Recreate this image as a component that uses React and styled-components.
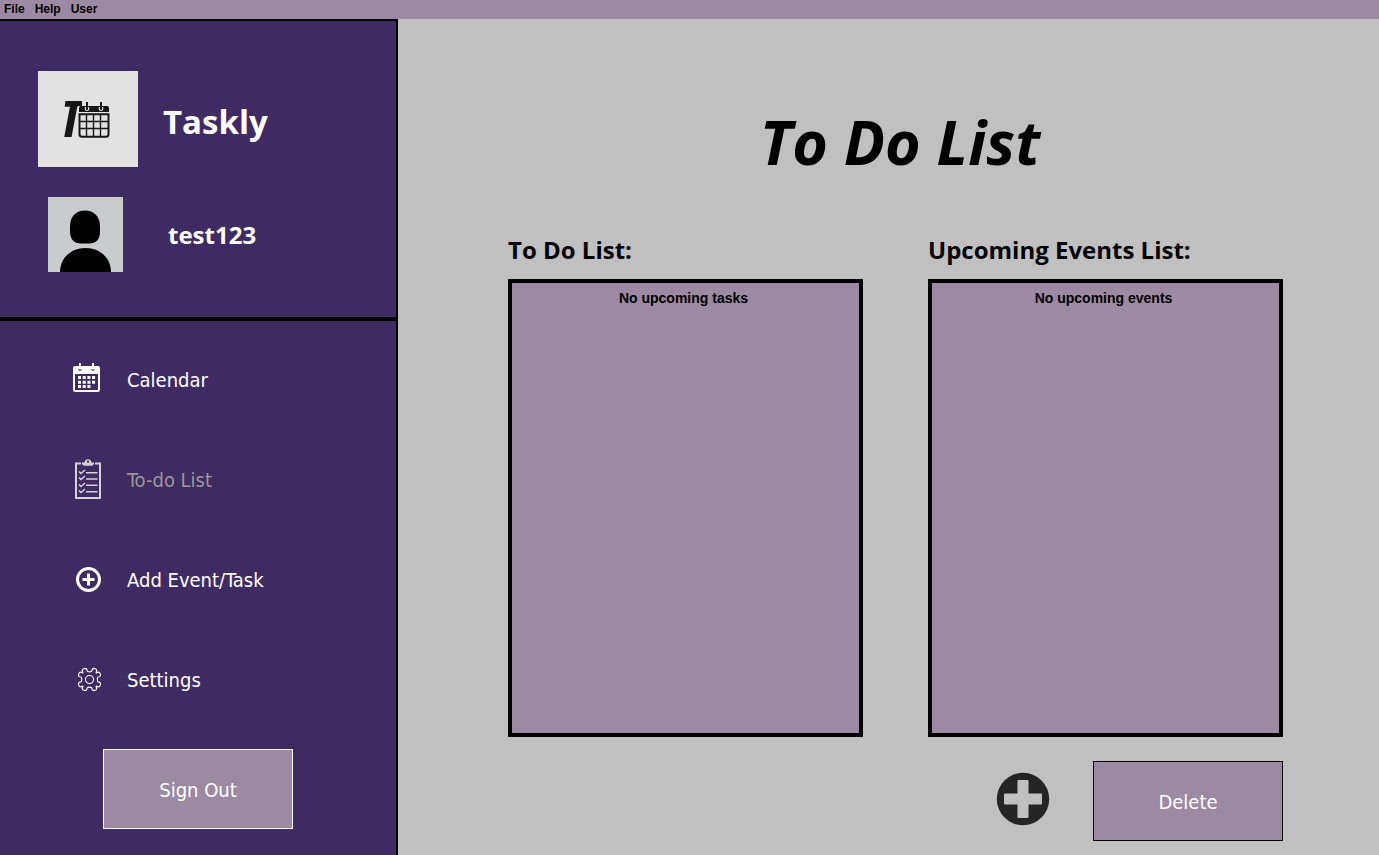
import React from "react";
import styled, { createGlobalStyle } from "styled-components";

const color = {
  violet: "#3f2b63",
  mauve: "#9c8aa3",
  silver: "#c0c0c0",
};
const uiBold = '"Open Sans", "Noto Sans", sans-serif';
const uiPlain = '"DejaVu Sans Condensed", "Noto Sans", sans-serif';
const arial = '"Liberation Sans", Arial, sans-serif';

const GlobalStyle = createGlobalStyle`
  *, *::before, *::after { box-sizing: border-box; }
  body { margin: 0; background: ${color.silver}; }
  button { font: inherit; color: inherit; cursor: pointer; }
  h1, h2, p { margin: 0; }
`;

const Page = styled.div`
  display: flex;
  flex-direction: column;
  min-height: 100vh;
`;

const MenuBar = styled.header`
  display: flex;
  align-items: flex-start;
  gap: 10px;
  height: 19px;
  padding: 0 4px;
  background: ${color.mauve};
  font: bold 12px/18px ${arial};
`;

const MenuButton = styled.button`
  padding: 0;
  border: 0;
  background: none;
`;

const Body = styled.div`
  display: flex;
  flex: 1;
`;

const Sidebar = styled.aside`
  display: flex;
  flex-direction: column;
  flex: none;
  width: 398px;
  border: solid #000;
  border-width: 2px 2px 0 0;
  background: ${color.violet};
  color: #fff;
`;

const Identity = styled.section`
  height: 300px;
  padding: 50px 38px 0;
  border-bottom: 4px solid #000;
`;

const BrandRow = styled.div`
  display: flex;
  align-items: center;
  gap: 25px;
  margin-bottom: 30px;
`;

const BrandName = styled.h1`
  padding-top: 6px;
  font: bold 33px/48px ${uiBold};
`;

const UserRow = styled.div`
  display: flex;
  align-items: center;
  gap: 45px;
  padding-left: 10px;
`;

const UserName = styled.p`
  font: bold 24px/32px ${uiBold};
`;

const Nav = styled.nav`
  display: flex;
  flex-direction: column;
  gap: 60px;
  padding: 39px 68px 0;
`;

const NavButton = styled.button`
  display: flex;
  align-items: center;
  gap: 19px;
  height: 40px;
  padding: 0;
  border: 0;
  background: none;
  color: #fff;
  font: 20px/24px ${uiPlain};

  &:disabled {
    color: #999;
    cursor: default;
  }
`;

const ActionButton = styled.button`
  width: 190px;
  height: 80px;
  padding: 2px 0 0;
  border: 1px solid ${(p) => p.$edge};
  background: ${color.mauve};
  color: #fff;
  font: 20px/24px ${uiPlain};
`;

const SignOut = styled(ActionButton)`
  margin: 49px 0 26px 103px;
`;

const Main = styled.main`
  flex: 1;
  padding: 81px 96px 14px 110px;
  color: #000;
`;

const Title = styled.h1`
  padding-left: 9px;
  text-align: center;
  font: italic bold 61px/84px ${uiBold};
`;

const Lists = styled.div`
  display: grid;
  grid-template-columns: 1fr 1fr;
  gap: 65px;
  margin-top: 46px;
`;

const ListTitle = styled.h2`
  margin-bottom: 9px;
  font: bold 24px/40px ${uiBold};
  white-space: nowrap;
`;

const ListBox = styled.div`
  height: 458px;
  padding: 7px 4px 0 0;
  border: 4px solid #000;
  background: ${color.mauve};
  text-align: center;
  font: bold 14px/16px ${arial};
`;

const Actions = styled.div`
  display: flex;
  justify-content: flex-end;
  align-items: center;
  gap: 43px;
  margin-top: 24px;
`;

const RoundButton = styled.button`
  display: flex;
  padding: 0 0 4px;
  border: 0;
  background: none;
`;

const Logo = () => (
  <svg width="100" height="96" viewBox="0 0 100 96" role="img" aria-label="Taskly logo">
    <rect width="100" height="96" fill="#e2e2e2" />
    <text x="17" y="66" fill="#161616" fontFamily='"Liberation Sans Narrow", "Liberation Sans", sans-serif' fontSize="51" fontWeight="bold" fontStyle="italic">T</text>
    <path d="M16 26h12l-2 14H16zM44 26h30v42H40V35h4z" fill="#e2e2e2" />
    <path d="M41 41v-4q0-2 2-2h26q2 0 2 2v4z" fill="#161616" />
    <path d="M49 31v6M63 31v6" stroke="#161616" strokeWidth="2" />
    <path d="M47.500 36q-.8 3.500 1.500 3.500t1.500-3.500M61.500 36q-.8 3.500 1.500 3.500t1.500-3.500" fill="none" stroke="#e2e2e2" strokeWidth="1.200" />
    <path d="M41.500 43.300h29v20q0 2.400-2.500 2.400h-24q-2.500 0-2.500-2.400z" fill="none" stroke="#161616" strokeWidth="2" />
    <path d="M48.500 43v22M55.500 43v22M62.500 43v22M41 50.500h30M41 57.500h30" stroke="#161616" strokeWidth="1.400" />
  </svg>
);

const Avatar = () => (
  <svg width="75" height="75" viewBox="0 0 75 75" role="img" aria-label="Profile picture">
    <rect width="75" height="75" fill="#c8cccd" />
    <path d="M37 13.500c9 0 15 6 15 16v5c0 8-4 12-11 12h-8c-7 0-11-4-11-12v-5c0-10 6-16 15-16z" />
    <path d="M12 75c0-14 11-24 25.500-24S63 61 63 75z" />
  </svg>
);

const CalendarIcon = () => (
  <svg width="40" height="40" viewBox="0 0 40 40" aria-hidden="true">
    <path d="M5 14V8q0-2 2-2h23q2 0 2 2v6z" fill="#fff" />
    <path d="M12 3v5M25 3v5" stroke="#fff" strokeWidth="2" />
    <path d="M10.500 8q0 2.500 1.500 2.500T13.500 8M23.500 8q0 2.500 1.500 2.500T26.500 8" fill="none" stroke={color.violet} />
    <rect x="6" y="8" width="25" height="23" rx="1.500" fill="none" stroke="#fff" strokeWidth="2" />
    <path d="M10 17.500h17.100M10 22.300h17.100M10 26.500h12.400" fill="none" stroke="#fff" strokeWidth="3" strokeDasharray="3 1.700" />
  </svg>
);

const ChecklistIcon = () => (
  <svg width="40" height="40" viewBox="0 0 40 40" overflow="visible" fill="none" stroke="#d4d2d8" aria-hidden="true">
    <path d="M13 3.500H8V38h24V3.500h-5" strokeWidth="2" />
    <path d="M14 2.500h2.500Q17-.8 20-.8t3.500 3.300H26v1.300q-.5 1.900-2.500 1.900h-7q-2 0-2.500-1.900z" fill="#d4d2d8" stroke="none" />
    <circle cx="20" cy="1.700" r="1.100" fill={color.violet} stroke="none" />
    <path d="M11 11.500l2 2 4-3.500M11 17.500l2 2 4-3.500M11 24.500l2 2 4-3.500M11 30.500l2 2 4-3.500" strokeWidth="1.500" />
    <path d="M18 12.700h11.500M18 19h11.500M18 25.300h11.500M18 31.800h11.500" strokeWidth="1.500" />
  </svg>
);

const AddIcon = () => (
  <svg width="40" height="40" viewBox="0 0 40 40" fill="none" stroke="#fff" strokeWidth="3" aria-hidden="true">
    <circle cx="20.500" cy="19.500" r="11" />
    <path d="M20.500 13.500v12M14.500 19.500h12" />
  </svg>
);

const GearIcon = () => (
  <svg width="40" height="40" viewBox="0 0 40 40" fill="none" stroke="#fff" strokeWidth="1.100" aria-hidden="true">
    <circle cx="21.500" cy="19.500" r="4" />
    <g transform="translate(21.500 19.500)" strokeLinejoin="round">
      <path d="M-2.200-8.200Q-2.600-11.200-4.600-11.100L-6.800-10.200Q-7.900-9 -6.700-7.400Q-6.200-6.200-7.400-6.700Q-9-7.900-10.200-6.800L-11.100-4.600Q-11.200-2.600-8.200-2.200Q-7 0-8.200 2.200Q-11.200 2.600-11.100 4.600L-10.200 6.800Q-9 7.900-7.400 6.700Q-6.200 6.200-6.700 7.400Q-7.900 9-6.800 10.200L-4.600 11.100Q-2.600 11.200-2.200 8.200Q0 7 2.200 8.200Q2.600 11.200 4.600 11.100L6.800 10.200Q7.900 9 6.700 7.400Q6.200 6.200 7.400 6.700Q9 7.900 10.200 6.800L11.100 4.600Q11.200 2.600 8.200 2.200Q7 0 8.200-2.200Q11.200-2.600 11.100-4.600L10.200-6.800Q9-7.900 7.400-6.700Q6.200-6.200 6.700-7.400Q7.900-9 6.800-10.200L4.600-11.100Q2.600-11.200 2.200-8.200Q0-7-2.200-8.200z" />
    </g>
  </svg>
);

const PlusIcon = () => (
  <svg width="54" height="54" viewBox="0 0 54 54" aria-hidden="true">
    <circle cx="27" cy="27" r="26.200" fill="#252525" />
    <rect x="21.500" y="8" width="11" height="38" rx="1" fill={color.silver} />
    <rect x="8" y="21.500" width="38" height="11" rx="1" fill={color.silver} />
  </svg>
);

const navItems = [
  { label: "Calendar", Icon: CalendarIcon },
  { label: "To-do List", Icon: ChecklistIcon, current: true },
  { label: "Add Event/Task", Icon: AddIcon },
  { label: "Settings", Icon: GearIcon },
];

const lists = [
  { title: "To Do List:", empty: "No upcoming tasks" },
  { title: "Upcoming Events List:", empty: "No upcoming events" },
];

export default function App() {
  return (
    <Page>
      <GlobalStyle />
      <MenuBar>
        {["File", "Help", "User"].map((name) => (
          <MenuButton key={name} type="button">{name}</MenuButton>
        ))}
      </MenuBar>
      <Body>
        <Sidebar>
          <Identity>
            <BrandRow>
              <Logo />
              <BrandName>Taskly</BrandName>
            </BrandRow>
            <UserRow>
              <Avatar />
              <UserName>test123</UserName>
            </UserRow>
          </Identity>
          <Nav>
            {navItems.map(({ label, Icon, current }) => (
              <NavButton key={label} type="button" disabled={current}>
                <Icon />
                {label}
              </NavButton>
            ))}
          </Nav>
          <SignOut type="button" $edge="#fff">Sign Out</SignOut>
        </Sidebar>
        <Main>
          <Title>To Do List</Title>
          <Lists>
            {lists.map(({ title, empty }) => (
              <section key={title}>
                <ListTitle>{title}</ListTitle>
                <ListBox>{empty}</ListBox>
              </section>
            ))}
          </Lists>
          <Actions>
            <RoundButton type="button" aria-label="Add">
              <PlusIcon />
            </RoundButton>
            <ActionButton type="button" $edge="#000">Delete</ActionButton>
          </Actions>
        </Main>
      </Body>
    </Page>
  );
}
